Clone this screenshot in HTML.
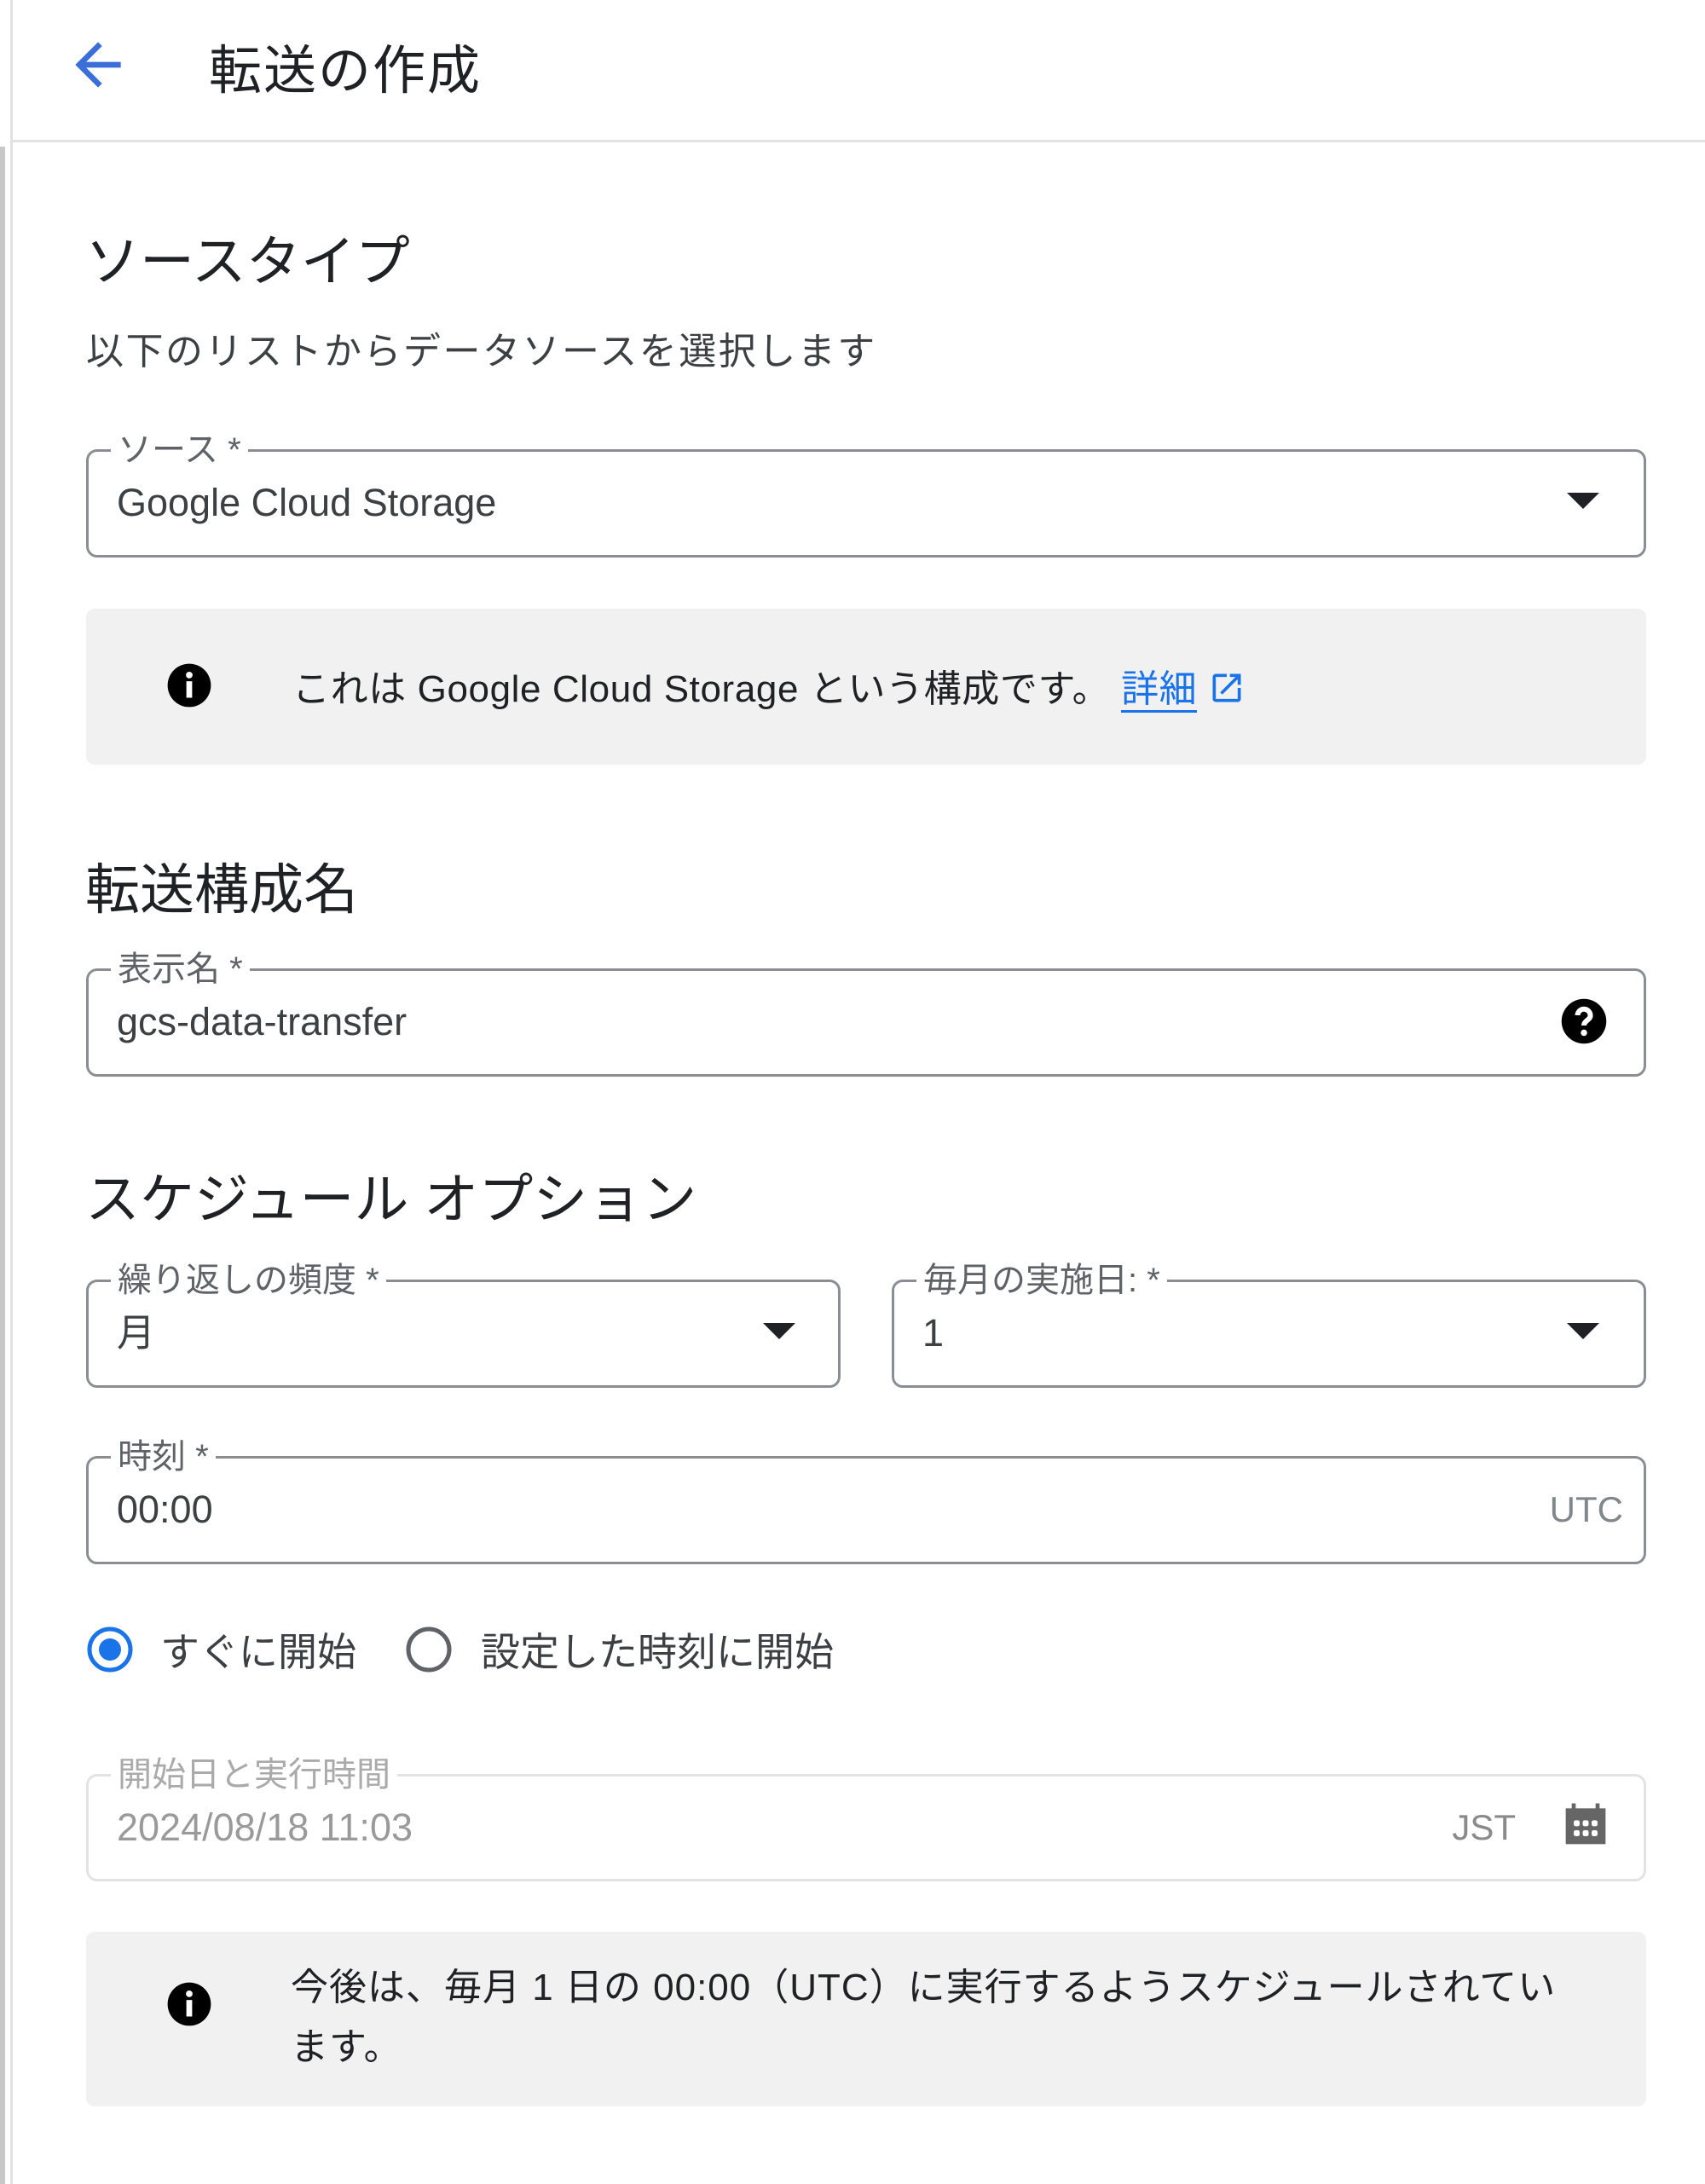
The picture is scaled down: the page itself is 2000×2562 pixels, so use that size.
<!DOCTYPE html>
<html><head><meta charset="utf-8"><style>
*{margin:0;padding:0;box-sizing:border-box}
body{width:2000px;height:2562px;position:relative;background:#fff;font-family:"Liberation Sans","Noto Sans CJK JP",sans-serif;color:#202124;overflow:hidden}
.a{position:absolute;white-space:nowrap}
.vc{transform:translateY(-50%)}
.box{position:absolute;border:3px solid #8a8e93;border-radius:13px}
.lbl{position:absolute;background:#fff;padding:0 8px;font-size:40px;color:#5f6368;line-height:44px;transform:translateY(-50%);top:-2px;left:26px;white-space:nowrap}
.val{position:absolute;left:33px;font-size:45px;color:#3c4043;line-height:50px;top:35px;white-space:nowrap}
.h{font-size:64px;color:#202124}
.info{position:absolute;left:101px;width:1830px;background:#f1f1f1;border-radius:10px}
</style></head><body>
<div class="a" style="left:0;top:172px;width:6px;height:2390px;background:#c8c8c8"></div>
<div class="a" style="left:12px;top:0;width:3px;height:2562px;background:#e2e2e2"></div>
<div class="a" style="left:12px;top:164px;width:1988px;height:3px;background:#e2e2e2"></div>

<svg class="a" style="left:74px;top:36px" width="82" height="80" viewBox="0 0 24 24"><path d="M20 11H7.83l5.59-5.59L12 4l-8 8 8 8 1.41-1.41L7.83 13H20v-2z" fill="#3a6fd8"/></svg>
<div class="a vc" style="left:245px;top:77px;font-size:62px;letter-spacing:2px">転送の作成</div>

<div class="a vc h" style="left:100px;top:302px">ソースタイプ</div>
<div class="a vc" style="left:101px;top:408px;font-size:44px;color:#3c4043;letter-spacing:2.5px">以下のリストからデータソースを選択します</div>

<div class="box" style="left:101px;top:527px;width:1830px;height:127px">
<div class="lbl">ソース *</div>
<div class="val">Google Cloud Storage</div>
<svg class="a" style="right:52px;top:48px" width="38" height="20"><path d="M0 0h38L19 19z" fill="#202124"/></svg>
</div>

<div class="info" style="top:714px;height:183px">
<svg class="a" style="left:92px;top:61px" width="58" height="58" viewBox="0 0 24 24"><circle cx="12" cy="12" r="10.5" fill="#000"/><rect x="10.6" y="10" width="2.8" height="8" fill="#fff"/><circle cx="12" cy="7" r="1.6" fill="#fff"/></svg>
<div class="a vc" style="left:242px;top:90px;font-size:44px;color:#202124;letter-spacing:0.6px">これは Google Cloud Storage という構成です。 <span style="color:#1a73e8;border-bottom:3px solid #1a73e8">詳細</span> <svg width="44" height="44" viewBox="0 0 24 24" style="vertical-align:-6px"><path d="M19 19H5V5h7V3H5a2 2 0 0 0-2 2v14a2 2 0 0 0 2 2h14c1.1 0 2-.9 2-2v-7h-2v7zM14 3v2h3.59l-9.83 9.83 1.41 1.41L19 6.41V10h2V3h-7z" fill="#1a73e8"/></svg></div>
</div>

<div class="a vc h" style="left:100px;top:1039px">転送構成名</div>
<div class="box" style="left:101px;top:1136px;width:1830px;height:127px">
<div class="lbl">表示名 *</div>
<div class="val">gcs-data-transfer</div>
<svg class="a" style="right:40px;top:29px" width="60" height="60" viewBox="0 0 24 24"><circle cx="12" cy="12" r="10.5" fill="#000"/><path d="M9 9.2a3 3 0 0 1 6 .2c0 2-3 2.3-3 4.6" stroke="#fff" stroke-width="2.4" fill="none"/><circle cx="12" cy="17.4" r="1.5" fill="#fff"/></svg>
</div>

<div class="a vc h" style="left:100px;top:1402px">スケジュール オプション</div>
<div class="box" style="left:101px;top:1501px;width:885px;height:127px">
<div class="lbl">繰り返しの頻度 *</div>
<div class="val">月</div>
<svg class="a" style="right:50px;top:48px" width="38" height="20"><path d="M0 0h38L19 19z" fill="#202124"/></svg>
</div>
<div class="box" style="left:1046px;top:1501px;width:885px;height:127px">
<div class="lbl">毎月の実施日: *</div>
<div class="val">1</div>
<svg class="a" style="right:52px;top:48px" width="38" height="20"><path d="M0 0h38L19 19z" fill="#202124"/></svg>
</div>

<div class="box" style="left:101px;top:1708px;width:1830px;height:127px">
<div class="lbl">時刻 *</div>
<div class="val">00:00</div>
<div class="a" style="right:24px;top:35px;font-size:42px;line-height:50px;color:#80868b">UTC</div>
</div>

<svg class="a" style="left:100px;top:1906px" width="58" height="58"><circle cx="29" cy="29" r="24" stroke="#1a73e8" stroke-width="5" fill="none"/><circle cx="29" cy="29" r="13" fill="#1a73e8"/></svg>
<div class="a vc" style="left:188px;top:1935px;font-size:46px;color:#3c4043">すぐに開始</div>
<svg class="a" style="left:474px;top:1906px" width="58" height="58"><circle cx="29" cy="29" r="24" stroke="#5f6368" stroke-width="5" fill="none"/></svg>
<div class="a vc" style="left:564px;top:1935px;font-size:46px;color:#3c4043">設定した時刻に開始</div>

<div class="box" style="left:101px;top:2081px;width:1830px;height:126px;border-color:#e3e3e3">
<div class="lbl" style="color:#aaa">開始日と実行時間</div>
<div class="val" style="color:#9a9a9a">2024/08/18 11:03</div>
<div class="a" style="right:150px;top:35px;font-size:42px;line-height:50px;color:#8a8a8a">JST</div>
<svg class="a" style="right:40px;top:28px" width="56" height="56" viewBox="0 0 24 24"><rect x="5" y="1.5" width="2" height="4" fill="#666"/><rect x="17" y="1.5" width="2" height="4" fill="#666"/><rect x="2" y="4" width="20" height="18" fill="#666"/><g fill="#fff"><rect x="6" y="10" width="3" height="3" rx="1"/><rect x="10.5" y="10" width="3" height="3" rx="1"/><rect x="15" y="10" width="3" height="3" rx="1"/><rect x="6" y="15" width="3" height="3" rx="1"/><rect x="10.5" y="15" width="3" height="3" rx="1"/><rect x="15" y="15" width="3" height="3" rx="1"/></g></svg>
</div>

<div class="info" style="top:2266px;height:205px">
<svg class="a" style="left:92px;top:56px" width="58" height="58" viewBox="0 0 24 24"><circle cx="12" cy="12" r="10.5" fill="#000"/><rect x="10.6" y="10" width="2.8" height="8" fill="#fff"/><circle cx="12" cy="7" r="1.6" fill="#fff"/></svg>
<div class="a" style="left:240px;top:31px;font-size:44px;line-height:70px;color:#202124;white-space:normal;width:1560px;letter-spacing:1px">今後は、毎月 1 日の 00:00（UTC）に実行するようスケジュールされてい<br>ます。</div>
</div>
</body></html>
